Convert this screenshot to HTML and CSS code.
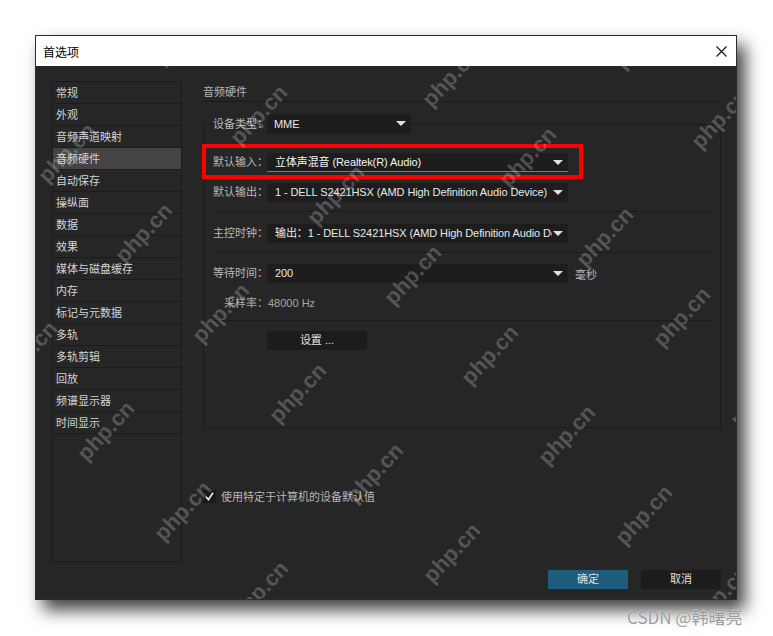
FILE: index.html
```html
<!DOCTYPE html>
<html lang="zh-CN">
<head>
    <meta charset="UTF-8">
    <meta name="viewport" content="width=device-width, initial-scale=1.0">
    <title>首选项</title>
    <link rel="stylesheet" href="styles.css">
</head>
<body>
    <div class="dialog">
        <div class="titlebar">
            <span class="title">首选项</span>
            <svg class="close" width="11" height="11" viewBox="0 0 11 11">
                <path d="M0.5 0.5L10.5 10.5M10.5 0.5L0.5 10.5" stroke="#111" stroke-width="1.1" fill="none"/>
            </svg>
        </div>
        <div class="dialog-body">
            <div class="content">
                <ul class="nav">
                    <li>常规</li>
                    <li>外观</li>
                    <li>音频声道映射</li>
                    <li class="active">音频硬件</li>
                    <li>自动保存</li>
                    <li>操纵面</li>
                    <li>数据</li>
                    <li>效果</li>
                    <li>媒体与磁盘缓存</li>
                    <li>内存</li>
                    <li>标记与元数据</li>
                    <li>多轨</li>
                    <li>多轨剪辑</li>
                    <li>回放</li>
                    <li>频谱显示器</li>
                    <li>时间显示</li>
                </ul>
                <div class="panel">
                    <div class="panel-title">音频硬件</div>
                    <fieldset class="group">
                        <legend class="field">
                            <span class="label">设备类型：</span>
                            <div class="select select-short"><span class="value">MME</span></div>
                        </legend>
                        <div class="field marked row-input">
                            <span class="label">默认输入：</span>
                            <div class="select focused"><span class="value">立体声混音 (Realtek(R) Audio)</span></div>
                        </div>
                        <div class="field row-output">
                            <span class="label">默认输出：</span>
                            <div class="select"><span class="value">1 - DELL S2421HSX (AMD High Definition Audio Device)</span></div>
                        </div>
                        <div class="sep"></div>
                        <div class="field row-clock">
                            <span class="label">主控时钟：</span>
                            <div class="select"><span class="value">输出：1 - DELL S2421HSX (AMD High Definition Audio Device)</span></div>
                        </div>
                        <div class="sep"></div>
                        <div class="field row-latency">
                            <span class="label">等待时间：</span>
                            <div class="select"><span class="value">200</span></div>
                            <span class="unit">毫秒</span>
                        </div>
                        <div class="rate">采样率：48000 Hz</div>
                        <div class="sep sep-last"></div>
                        <button class="btn btn-settings">设置 ...</button>
                    </fieldset>
                    <label class="check">
                        <span class="box">
                            <svg width="13" height="13" viewBox="0 0 13 13">
                                <path d="M3 6.8L5.4 9.6L10 2.8" stroke="#f2f2f2" stroke-width="1.6" fill="none"/>
                            </svg>
                        </span>
                        使用特定于计算机的设备默认值
                    </label>
                </div>
            </div>
            <div class="footer">
                <button class="btn btn-primary">确定</button>
                <button class="btn">取消</button>
            </div>
            <div class="marks"></div>
        </div>
    </div>
    <div class="signature">CSDN @韩曙亮</div>

    <script>
        // php.cn marks laid on a slanted grid across the dialog body
        const marks = document.querySelector('.marks');
        for (let i = -3; i <= 4; i++) {
            for (let j = -2; j <= 8; j++) {
                const x = 67 + 192 * i + 77 * j - 36;
                const y = 153 - 38 * i + 80 * j - 66;
                if (x < -80 || x > 780 || y < -60 || y > 600) continue;
                const mark = document.createElement('span');
                mark.className = 'mark';
                mark.textContent = 'php.cn';
                mark.style.left = x + 'px';
                mark.style.top = y + 'px';
                marks.appendChild(mark);
            }
        }
    </script>
</body>
</html>
```

FILE: styles.css
```css
* {
    margin: 0;
    padding: 0;
    box-sizing: border-box;
}

body {
    font-family: "Liberation Sans", "Noto Sans CJK SC", sans-serif;
    font-size: 11px;
    background: #fff;
    height: 100vh;
    overflow: hidden;
    padding: 35px 0 0 35px;
    position: relative;
}

.dialog {
    width: 702px;
    height: 565px;
    border: 1px solid #2c2c2c;
    background: #262626;
    box-shadow: 8px 10px 16px rgba(0, 0, 0, 0.75);
    display: flex;
    flex-direction: column;
}

.titlebar {
    height: 30px;
    background: #fff;
    display: flex;
    align-items: center;
    justify-content: space-between;
    padding: 0 9px 0 7px;
}

.title {
    font-family: "Noto Sans CJK SC", sans-serif;
    font-size: 12px;
    color: #000;
}

.dialog-body {
    position: relative;
    flex: 1;
    overflow: hidden;
    padding: 15px 15px 10px 16px;
    display: flex;
    flex-direction: column;
}

.content {
    display: flex;
    gap: 21px;
    height: 481px;
}

/* category list on the left */
.nav {
    list-style: none;
    width: 130px;
    height: 481px;
    border: 1px solid #1b1b1b;
}

.nav li {
    height: 22px;
    line-height: 22px;
    padding-left: 3px;
    border-bottom: 1px solid #1b1b1b;
    color: #d4d4d4;
    white-space: nowrap;
}

.nav li.active {
    background: #444;
}

.panel {
    flex: 1;
}

.panel-title {
    height: 21px;
    line-height: 22px;
    border-bottom: 1px solid #1b1b1b;
    color: #b4b4b4;
}

.group {
    margin-top: 12px;
    height: 314px;
    border: 1px solid #1b1b1b;
    padding: 0 8px 0 9px;
    min-width: 0;
}

.group legend {
    height: 20px;
    padding: 0;
}

.field {
    display: flex;
    align-items: center;
    height: 19px;
}

.label {
    width: 54px;
    color: #b8b8b8;
    line-height: 19px;
    white-space: nowrap;
}

.select {
    position: relative;
    width: 301px;
    height: 19px;
    line-height: 19px;
    padding: 0 16px 0 8px;
    background: #1d1d1d;
    color: #e8e8e8;
    letter-spacing: -0.1px;
}

.select .value {
    display: block;
    overflow: hidden;
    white-space: nowrap;
}

.select::after {
    content: "";
    position: absolute;
    right: 5px;
    top: 7px;
    border-left: 5px solid transparent;
    border-right: 5px solid transparent;
    border-top: 5px solid #e0e0e0;
}

.select-short {
    width: 144px;
    height: 20px;
    line-height: 20px;
    padding-left: 7px;
}

.select.focused {
    color: #f4f4f4;
    box-shadow: inset 0 -1px 0 #3a8ad0;
}

/* red annotation around the input device */
.marked {
    position: relative;
    width: 355px;
}

.marked::before {
    content: "";
    position: absolute;
    inset: -9px -15px -7px -11px;
    border: 4px solid #ff0000;
}

.row-input {
    margin-top: 19px;
}

.row-output {
    margin-top: 11px;
}

.row-clock {
    margin-top: 12px;
}

.row-latency {
    margin-top: 11px;
}

.sep {
    height: 1px;
    margin-top: 9px;
    background: #1b1b1b;
}

.sep-last {
    margin-top: 8px;
}

.unit {
    margin-left: 7px;
    color: #b8b8b8;
    font-family: "Noto Sans CJK SC", sans-serif;
}

.rate {
    margin-top: 11px;
    height: 18px;
    line-height: 18px;
    padding-left: 11px;
    color: #a6a6a6;
}

.btn {
    display: block;
    width: 80px;
    height: 19px;
    border: none;
    background: #1c1c1c;
    color: #e0e0e0;
    font: inherit;
    line-height: 19px;
    text-align: center;
}

.btn-settings {
    width: 100px;
    margin: 10px 0 0 54px;
}

.btn-primary {
    background: #1d5c7c;
}

.check {
    display: flex;
    align-items: center;
    gap: 5px;
    margin-top: 60px;
    color: #b6b6b6;
}

.box {
    width: 13px;
    height: 13px;
    background: #1a1a1a;
    display: flex;
}

.footer {
    display: flex;
    justify-content: flex-end;
    gap: 13px;
    margin-top: 8px;
}

/* site watermark */
.marks {
    position: absolute;
    inset: 0;
    overflow: hidden;
    pointer-events: none;
    z-index: 2;
}

.mark {
    position: absolute;
    transform: translate(-50%, -50%) rotate(-47deg);
    font-family: "Liberation Sans", sans-serif;
    font-weight: bold;
    font-size: 22px;
    color: rgba(255, 255, 255, 0.22);
    white-space: nowrap;
}

.signature {
    position: absolute;
    left: 627px;
    top: 604px;
    font-family: "Noto Sans CJK SC", sans-serif;
    font-size: 17px;
    color: #9c9c9c;
    text-shadow: 0 0 1px #fff;
    white-space: nowrap;
}
```
